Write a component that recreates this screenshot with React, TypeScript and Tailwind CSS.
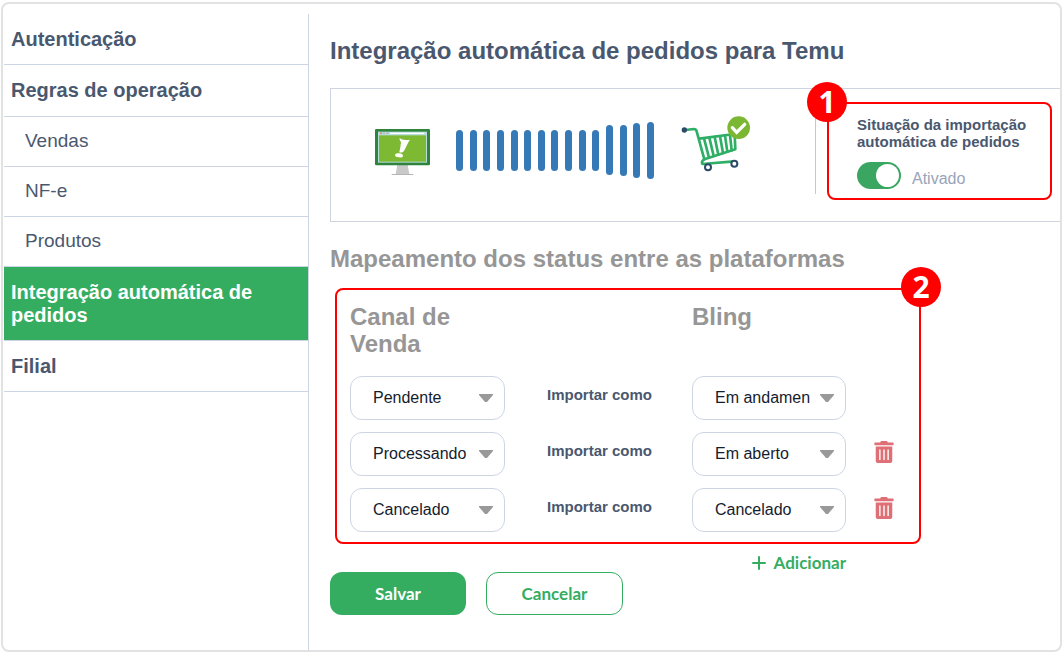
import React, { useState } from 'react';
import { FaTrashAlt } from 'react-icons/fa';
import clsx from 'clsx';

interface MenuItem {
  label: string;
  kind: 'item' | 'group' | 'sub';
  active?: boolean;
}

interface Mapping {
  id: number;
  channel: string;
  bling: string;
  removable: boolean;
}

const menu: MenuItem[] = [
  { label: 'Autenticação', kind: 'item' },
  { label: 'Regras de operação', kind: 'group' },
  { label: 'Vendas', kind: 'sub' },
  { label: 'NF-e', kind: 'sub' },
  { label: 'Produtos', kind: 'sub' },
  { label: 'Integração automática de pedidos', kind: 'item', active: true },
  { label: 'Filial', kind: 'item' },
];

const channelOptions = ['Pendente', 'Processando', 'Cancelado'];
const blingOptions = ['Em andamento', 'Em aberto', 'Cancelado'];

const initialMappings: Mapping[] = [
  { id: 1, channel: 'Pendente', bling: 'Em andamento', removable: false },
  { id: 2, channel: 'Processando', bling: 'Em aberto', removable: true },
  { id: 3, channel: 'Cancelado', bling: 'Cancelado', removable: true },
];

// Heights of the bars between the store and the cart
const bars = [41, 41, 41, 41, 41, 41, 41, 41, 41, 41, 41, 50, 51, 55, 57];

function Sidebar() {
  return (
    <nav className="mt-2.5 w-[306px] shrink-0 border-r border-[#ccd5e4]">
      <ul className="pl-px">
        {menu.map((item) => (
          <li key={item.label} className="border-b border-[#ccd5e4]">
            <a
              href="#"
              aria-current={item.active ? 'page' : undefined}
              className={clsx(
                'block leading-[23px]',
                item.kind === 'item' && 'pt-3.5 pb-[13px] pl-[7px] pr-10 text-xl font-bold',
                item.kind === 'group' && 'py-3.5 pl-[7px] text-xl font-bold',
                item.kind === 'sub' && 'pt-3 pb-3.5 pl-[21px] text-[19px]',
                item.active ? 'bg-[#35ad61] text-white' : 'text-[#4a586f]'
              )}
            >
              {item.label}
            </a>
          </li>
        ))}
      </ul>
    </nav>
  );
}

function MonitorIcon() {
  return (
    <svg viewBox="45 87 165 138" className="mt-1 h-[46px] w-[55px] shrink-0" aria-hidden="true">
      <path d="M112 194h31l5 29h-41z" fill="#c9c9c9" />
      <path d="M95 222h65v3H95z" fill="#b5b5b5" />
      <rect x="45" y="87" width="165" height="109" rx="4" fill="#2f843b" />
      <rect x="54" y="95" width="147" height="93" fill="#b9dce0" />
      <rect x="57" y="106" width="141" height="79" fill="#7eb933" />
      <rect x="90" y="98" width="103" height="4" fill="#fff" />
      <circle cx="63" cy="100" r="3" fill="#e0806c" />
      <circle cx="72" cy="100" r="3" fill="#d9b08a" />
      <circle cx="82" cy="100" r="3" fill="#8fbfe0" />
      <path d="M119 114l5 4q11 3 26 1-3 4-6 10l-12 24q-5 6-14 4 4-17 5-31-6-4-4-12z" fill="#fff" />
      <ellipse cx="117" cy="166" rx="12" ry="6" transform="rotate(8 117 166)" fill="#fff" />
    </svg>
  );
}

function CartIcon() {
  return (
    <svg viewBox="33 48 210 210" className="size-[70px] shrink-0" fill="none" aria-hidden="true">
      <g stroke="#2fae66" strokeLinecap="round" strokeLinejoin="round">
        <path d="M46 93l26-3q6 0 8 7l23 84q-10 5-6 14l96-8" strokeWidth="8" />
        <path d="M88 119l106-14 2 46-93 30" strokeWidth="8" />
        <path
          d="M102 118l15 58M118 116l13 55M134 114l11 53M150 112l9 50M165 110l7 48M180 108l5 46"
          strokeWidth="8"
        />
      </g>
      <circle cx="43" cy="93" r="8" fill="#2b4a68" />
      <circle cx="114" cy="205" r="9" fill="#fff" stroke="#2b4a68" strokeWidth="6" />
      <circle cx="193" cy="194" r="9" fill="#fff" stroke="#2b4a68" strokeWidth="6" />
      <circle cx="206" cy="86" r="34" fill="#7cb733" />
      <path d="M187 86l13 14 24-24" stroke="#fff" strokeWidth="10" strokeLinecap="round" />
    </svg>
  );
}

function StepBadge({ number, className }: { number: number; className: string }) {
  return (
    <span
      className={clsx(
        "absolute flex size-10 items-center justify-center rounded-full bg-[#ff0000] font-['Open_Sans',sans-serif] text-[30px] leading-10 font-bold text-white",
        className
      )}
    >
      {number}
    </span>
  );
}

interface StatusSelectProps {
  label: string;
  value: string;
  options: string[];
  onChange: (value: string) => void;
}

function StatusSelect({ label, value, options, onChange }: StatusSelectProps) {
  return (
    <div className="relative">
      <select
        aria-label={label}
        value={value}
        onChange={(e) => onChange(e.target.value)}
        className="h-11 w-full appearance-none rounded-xl border border-[#cdd5e3] bg-white pr-[35px] pl-[22px] text-base text-[#141c2e]"
      >
        {options.map((option) => (
          <option key={option}>{option}</option>
        ))}
      </select>
      <svg
        viewBox="0 0 14 8"
        className="pointer-events-none absolute top-[18px] right-3 h-2 w-3.5"
        aria-hidden="true"
      >
        <path d="M0 0h14v1L8 8H6L0 1z" fill="#999" />
      </svg>
    </div>
  );
}

export default function App() {
  const [enabled, setEnabled] = useState(true);
  const [mappings, setMappings] = useState<Mapping[]>(initialMappings);

  const updateMapping = (id: number, changes: Partial<Mapping>) => {
    setMappings(prev => prev.map(m => (m.id === id ? { ...m, ...changes } : m)));
  };

  const removeMapping = (id: number) => {
    setMappings(prev => prev.filter(m => m.id !== id));
  };

  const addMapping = () => {
    setMappings(prev => [
      ...prev,
      { id: Date.now(), channel: channelOptions[0], bling: blingOptions[0], removable: true },
    ]);
  };

  return (
    <div className="flex min-h-screen bg-white px-px py-0.5 font-['Liberation_Sans',Arial,sans-serif]">
      <div className="flex flex-1 rounded-lg border-2 border-[#e2e2e2]">
        <Sidebar />

        <main className="min-w-0 flex-1 pt-[33px] pb-8 pl-[21px]">
          <h1 className="text-2xl leading-7 font-bold text-[#4a586f]">
            Integração automática de pedidos para Temu
          </h1>

          {/* Import status */}
          <section className="mt-[23px] flex items-center border border-r-0 border-[#ccd5e0] pl-11">
            <div className="flex items-center pb-2.5">
              <MonitorIcon />
              <div className="ml-[26px] flex w-[198px] items-center justify-between">
                {bars.map((height, idx) => (
                  <span key={idx} className="w-[7px] rounded-full bg-[#357ab7]" style={{ height }} />
                ))}
              </div>
              <div className="ml-[27px]">
                <CartIcon />
              </div>
            </div>
            <div className="ml-16 h-[77px] w-px bg-[#c6c9cf]" />
            <div className="relative mt-[13px] mr-2 mb-[21px] ml-[11px] flex-1 rounded-lg border-2 border-[#ff0000] pt-3 pb-[9px] pl-7">
              <StepBadge number={1} className="-top-[22px] -left-[22px]" />
              <p className="text-[15px] leading-[17px] font-bold text-[#4a586f]">
                Situação da importação
                <br />
                automática de pedidos
              </p>
              <label className="mt-3 flex items-center gap-[11px] text-base leading-[21px] text-[#98a4ba]">
                <input
                  type="checkbox"
                  role="switch"
                  checked={enabled}
                  onChange={(e) => setEnabled(e.target.checked)}
                  className="flex h-[27px] w-11 appearance-none items-center rounded-full bg-gray-300 p-0.5 before:size-[23px] before:rounded-full before:bg-white before:content-[''] checked:justify-end checked:bg-[#3aa661]"
                />
                <span className="pt-1.5">{enabled ? 'Ativado' : 'Desativado'}</span>
              </label>
            </div>
          </section>

          <h2 className="mt-[23px] text-2xl leading-7 font-bold text-[#969696]">
            Mapeamento dos status entre as plataformas
          </h2>

          {/* Status mapping */}
          <section className="relative mt-[15px] ml-[5px] max-w-[586px] rounded-lg border-2 border-[#ff0000] pt-[13px] pb-2.5 pl-[13px]">
            <StepBadge number={2} className="-top-[23px] -right-[22px]" />
            <div className="mb-[19px] grid grid-cols-[155px_187px_154px_auto] text-2xl leading-[27px] font-bold text-[#969696]">
              <h3>Canal de Venda</h3>
              <h3 className="col-start-3">Bling</h3>
            </div>
            <div className="space-y-3">
              {mappings.map((mapping) => (
                <div key={mapping.id} className="grid grid-cols-[155px_187px_154px_auto] items-start">
                  <StatusSelect
                    label="Canal de Venda"
                    value={mapping.channel}
                    options={channelOptions}
                    onChange={(channel) => updateMapping(mapping.id, { channel })}
                  />
                  <span className="pl-[42px] text-[15px] leading-[38px] font-bold whitespace-nowrap text-[#4a586f]">
                    Importar como
                  </span>
                  <StatusSelect
                    label="Bling"
                    value={mapping.bling}
                    options={blingOptions}
                    onChange={(bling) => updateMapping(mapping.id, { bling })}
                  />
                  {mapping.removable && (
                    <button
                      type="button"
                      title="Remover"
                      onClick={() => removeMapping(mapping.id)}
                      className="mt-[9px] ml-[27px] w-5 text-[#de6f75]"
                    >
                      <FaTrashAlt size={22} />
                    </button>
                  )}
                </div>
              ))}
            </div>
          </section>

          <div className="mt-[11px] flex max-w-[516px] justify-end">
            <button
              type="button"
              onClick={addMapping}
              className="flex items-center gap-2 font-['Lato',sans-serif] text-[17px] leading-4 font-bold text-[#35ad61]"
            >
              <svg viewBox="0 0 14 14" className="size-3.5" aria-hidden="true">
                <path d="M7 1v12M1 7h12" stroke="currentColor" strokeWidth="2" strokeLinecap="round" />
              </svg>
              Adicionar
            </button>
          </div>

          <div className="mt-px flex gap-5 font-['Lato',sans-serif] text-[17px] font-bold">
            <button type="button" className="h-[43px] w-[136px] rounded-xl bg-[#35ad61] text-white">
              Salvar
            </button>
            <button
              type="button"
              className="h-[43px] w-[137px] rounded-xl border border-[#35ad61] text-[#35ad61]"
            >
              Cancelar
            </button>
          </div>
        </main>
      </div>
    </div>
  );
}
